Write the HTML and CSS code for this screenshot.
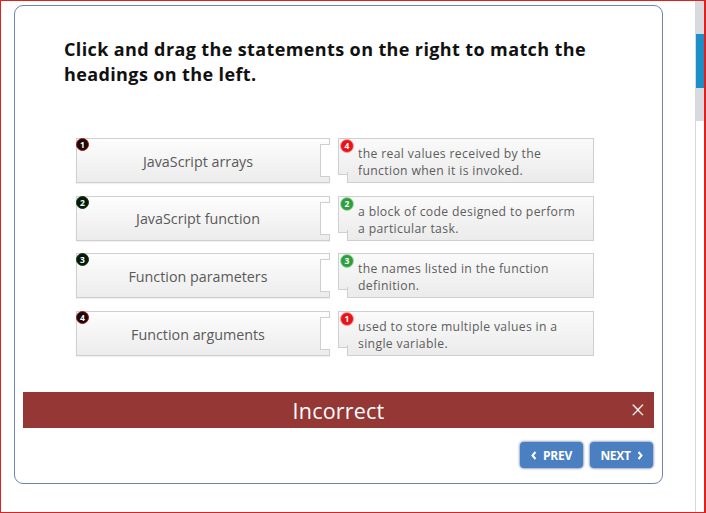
FILE: index.html
```html
<!DOCTYPE html>
<html>
<head>
<meta charset="utf-8">
<link rel="stylesheet" href="styles.css">
</head>
<body>
<div class="frame">
  <div class="main">
    <div class="card">
      <h1 class="title">Click and drag the statements on the right to match the headings on the left.</h1>
      <div class="pairs">
        <div class="row">
          <div class="head"><span class="badge dark red-ring">1</span>JavaScript arrays</div>
          <div class="stmt"><span class="badge red">4</span>the real values received by the function when it is invoked.</div>
        </div>
        <div class="row">
          <div class="head"><span class="badge dark green-ring">2</span>JavaScript function</div>
          <div class="stmt"><span class="badge green">2</span>a block of code designed to perform a particular task.</div>
        </div>
        <div class="row">
          <div class="head"><span class="badge dark green-ring">3</span>Function parameters</div>
          <div class="stmt"><span class="badge green">3</span>the names listed in the function definition.</div>
        </div>
        <div class="row">
          <div class="head"><span class="badge dark red-ring">4</span>Function arguments</div>
          <div class="stmt"><span class="badge red">1</span>used to store multiple values in a single variable.</div>
        </div>
      </div>
      <div class="feedback">
        <span class="fb-text">Incorrect</span>
        <span class="fb-close">×</span>
      </div>
      <div class="nav">
        <button class="btn"><svg width="6" height="9" viewBox="0 0 6 9"><path d="M4.5 1 L1.5 4.5 L4.5 8" fill="none" stroke="#fff" stroke-width="2"/></svg>PREV</button>
        <button class="btn">NEXT<svg width="6" height="9" viewBox="0 0 6 9"><path d="M1.5 1 L4.5 4.5 L1.5 8" fill="none" stroke="#fff" stroke-width="2"/></svg></button>
      </div>
    </div>
  </div>
  <div class="scroll">
    <div class="track"><div class="thumb"></div></div>
  </div>
</div>
</body>
</html>
```
FILE: styles.css
```css
* { box-sizing: border-box; }
html, body { margin: 0; padding: 0; background: #fff; }
body { font-family: "Open Sans", "Liberation Sans", sans-serif; }

.frame {
  width: 706px;
  height: 513px;
  border: 1px solid #e0201c;
  border-right-width: 2px;
  display: flex;
  overflow: hidden;
}
.main { flex: 1; }

.card {
  margin: 4px 0 0 13px;
  width: 649px;
  height: 479px;
  border: 1px solid #6c85ad;
  border-radius: 9px;
  padding: 31px 0 0 0;
  display: flex;
  flex-direction: column;
}

.title {
  margin: 0 0 0 49px;
  width: 560px;
  font-size: 18px;
  line-height: 25px;
  font-weight: 700;
  color: #111;
  letter-spacing: 0.38px;
}

.pairs {
  margin: 51px 0 0 61px;
  display: flex;
  flex-direction: column;
  gap: 12.7px;
}
.row {
  display: flex;
  height: 45px;
}

.head {
  position: relative;
  width: 254px;
  height: 45px;
  border: 1px solid #cfcfcf;
  background: linear-gradient(#fdfdfd, #ececec);
  display: flex;
  align-items: center;
  justify-content: center;
  padding: 1px 10px 0 0;
  font-size: 14.3px;
  color: #5a5a5a;
  box-shadow: 0 1px 1px rgba(0,0,0,0.06);
}
.head::after {
  content: "";
  position: absolute;
  right: -1px;
  top: 5px;
  bottom: 5px;
  width: 9px;
  background: #fff;
  border: 1px solid #cfcfcf;
  border-right: none;
}

.stmt {
  position: relative;
  margin-left: 17px;
  width: 247px;
  height: 45px;
  border: 1px solid #cfcfcf;
  border-left: none;
  background: linear-gradient(#fafafa, #ebebeb);
  padding: 6px 14px 0 11px;
  font-size: 12.2px;
  line-height: 17px;
  letter-spacing: 0.35px;
  color: #5d5d5d;
}
.stmt::before {
  content: "";
  position: absolute;
  left: -9px;
  top: -1px;
  height: 35px;
  width: 9px;
  background: linear-gradient(#fafafa, #eeeeee);
  border: 1px solid #cfcfcf;
  border-right: none;
}
.stmt::after {
  content: "";
  position: absolute;
  left: 0;
  top: 33px;
  bottom: -1px;
  width: 1px;
  background: #cfcfcf;
}

.badge {
  position: absolute;
  width: 13px;
  height: 13px;
  border-radius: 50%;
  color: #fff;
  font-size: 8.5px;
  font-weight: 700;
  line-height: 11px;
  text-align: center;
  z-index: 2;
}
.head .badge { left: -1px; top: -1px; }
.stmt .badge { left: -7px; top: 0px; width: 14px; height: 14px; line-height: 12px; }
.badge.dark { background: #1a0707; }
.badge.red-ring { border: 1px solid #a01818; }
.badge.green-ring { border: 1px solid #0b3a12; background: #061a0a; }
.badge.red { background: #e8141a; border: 1px solid #f6a0a0; }
.badge.green { background: #2f9e3e; border: 1px solid #a8dcae; }

.feedback {
  margin: 36px 8px 0 8px;
  height: 36px;
  background: #953735;
  color: #fff;
  position: relative;
  display: flex;
  align-items: center;
  justify-content: center;
}
.fb-text {
  font-size: 21.5px;
  font-weight: 400;
  letter-spacing: 0.2px;
}
.fb-close {
  position: absolute;
  right: 9px;
  top: 5px;
  font-size: 25px;
  line-height: 24px;
  font-weight: 300;
}

.nav {
  margin: 14px 9px 0 0;
  display: flex;
  justify-content: flex-end;
  gap: 7px;
}
.btn {
  height: 26px;
  width: 63px;
  border: none;
  border-radius: 4px;
  background: #4a7fc1;
  box-shadow: 0 0 2px 1px rgba(40,70,120,0.45);
  color: #fff;
  font-family: "Open Sans", "Liberation Sans", sans-serif;
  font-weight: 700;
  font-size: 12px;
  letter-spacing: -0.3px;
  display: flex;
  align-items: center;
  justify-content: center;
  gap: 6px;
  padding: 0;
}

.scroll {
  width: 9px;
  border-left: 1px solid #d8d8d8;
}
.track {
  height: 120px;
  background: #d7dbe0;
  padding-top: 33px;
}
.thumb {
  height: 54px;
  background: #1a8fc8;
}
```
